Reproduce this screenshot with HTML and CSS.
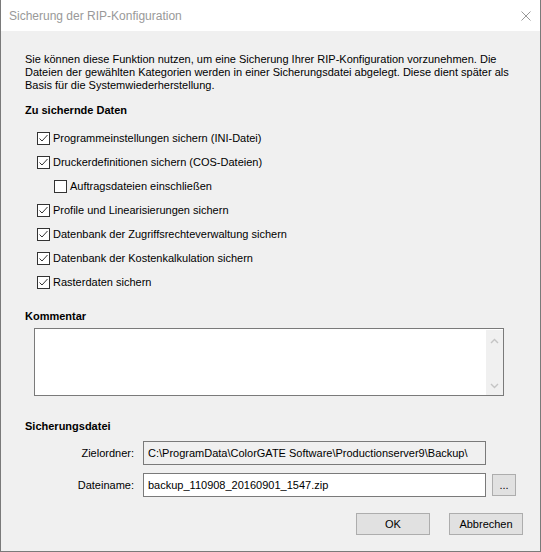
FILE: index.html
```
<html>
<head>
    <title>Sicherung der RIP-Konfiguration</title>
    <link rel="stylesheet" href="styles.css">
</head>
<body>
<div class="window">
    <div class="titlebar">
        <span class="title">Sicherung der RIP-Konfiguration</span>
        <svg class="close" width="10" height="10" viewBox="0 0 10 10">
            <path d="M0.5 0.5 L9.5 9.5 M9.5 0.5 L0.5 9.5" stroke="#999" stroke-width="1" fill="none"/>
        </svg>
    </div>
    <div class="content">
        <p class="intro">Sie können diese Funktion nutzen, um eine Sicherung Ihrer RIP-Konfiguration vorzunehmen. Die Dateien der gewählten Kategorien werden in einer Sicherungsdatei abgelegt. Diese dient später als Basis für die Systemwiederherstellung.</p>

        <h2 class="section">Zu sichernde Daten</h2>
        <div class="checks">
            <label class="check"><span class="box on"><svg width="11" height="11" viewBox="0 0 11 11"><path d="M1.5 5.5 L4 8 L9.5 2" stroke="#333" stroke-width="1" fill="none"/></svg></span>Programmeinstellungen sichern (INI-Datei)</label>
            <label class="check"><span class="box on"><svg width="11" height="11" viewBox="0 0 11 11"><path d="M1.5 5.5 L4 8 L9.5 2" stroke="#333" stroke-width="1" fill="none"/></svg></span>Druckerdefinitionen sichern (COS-Dateien)</label>
            <label class="check sub"><span class="box"></span>Auftragsdateien einschließen</label>
            <label class="check"><span class="box on"><svg width="11" height="11" viewBox="0 0 11 11"><path d="M1.5 5.5 L4 8 L9.5 2" stroke="#333" stroke-width="1" fill="none"/></svg></span>Profile und Linearisierungen sichern</label>
            <label class="check"><span class="box on"><svg width="11" height="11" viewBox="0 0 11 11"><path d="M1.5 5.5 L4 8 L9.5 2" stroke="#333" stroke-width="1" fill="none"/></svg></span>Datenbank der Zugriffsrechteverwaltung sichern</label>
            <label class="check"><span class="box on"><svg width="11" height="11" viewBox="0 0 11 11"><path d="M1.5 5.5 L4 8 L9.5 2" stroke="#333" stroke-width="1" fill="none"/></svg></span>Datenbank der Kostenkalkulation sichern</label>
            <label class="check"><span class="box on"><svg width="11" height="11" viewBox="0 0 11 11"><path d="M1.5 5.5 L4 8 L9.5 2" stroke="#333" stroke-width="1" fill="none"/></svg></span>Rasterdaten sichern</label>
        </div>

        <h2 class="section gap">Kommentar</h2>
        <div class="comment">
            <textarea></textarea>
            <div class="scroll">
                <svg width="9" height="6" viewBox="0 0 9 6"><path d="M1 5 L4.5 1.5 L8 5" stroke="#c4c4c4" stroke-width="1.4" fill="none"/></svg>
                <svg width="9" height="6" viewBox="0 0 9 6"><path d="M1 1 L4.5 4.5 L8 1" stroke="#c4c4c4" stroke-width="1.4" fill="none"/></svg>
            </div>
        </div>

        <h2 class="section file">Sicherungsdatei</h2>
        <div class="row first">
            <span class="label">Zielordner:</span>
            <input type="text" class="field readonly" readonly value="C:\ProgramData\ColorGATE Software\Productionserver9\Backup\">
        </div>
        <div class="row">
            <span class="label">Dateiname:</span>
            <input type="text" class="field" value="backup_110908_20160901_1547.zip">
            <button class="btn browse">...</button>
        </div>

        <div class="buttons">
            <button class="btn action">OK</button>
            <button class="btn action">Abbrechen</button>
        </div>
    </div>
</div>
</body>
</html>
```
FILE: styles.css
```
body {
    margin: 0;
    font-family: "Liberation Sans", Arial, sans-serif;
    font-size: 11px;
    color: #000;
}
.window {
    width: 541px;
    height: 552px;
    box-sizing: border-box;
    border: 1px solid #7a7a7a;
    border-top: none;
    background: #f0f0f0;
}
.titlebar {
    height: 31px;
    background: white;
    display: flex;
    align-items: center;
    justify-content: space-between;
    padding-left: 8px;
}
.title {
    font-size: 12px;
    color: #999;
}
.close {
    margin-right: 9px;
}
.content {
    padding: 22px 17px 0 24px;
}
.intro {
    margin: 0;
    line-height: 13px;
}
h2.section {
    margin: 12px 0 0;
    font-size: 11px;
    font-weight: bold;
    line-height: 13px;
}
h2.gap {
    margin-top: 16px;
}
h2.file {
    margin-top: 24px;
}
.checks {
    margin-top: 9px;
}
.check {
    display: flex;
    align-items: center;
    height: 24px;
    padding-left: 12px;
}
.check.sub {
    padding-left: 29px;
}
.box {
    width: 11px;
    height: 11px;
    border: 1px solid #333;
    background: white;
    margin-right: 3px;
    display: flex;
}
.comment {
    margin: 5px 0 0 9px;
    width: 470px;
    height: 68px;
    box-sizing: border-box;
    border: 1px solid #7a7a7a;
    background: white;
    display: flex;
}
.comment textarea {
    flex: 1;
    border: none;
    resize: none;
    outline: none;
    font-family: inherit;
}
.scroll {
    width: 17px;
    margin: 1px 0 0;
    background: #f0f0f0;
    display: flex;
    flex-direction: column;
    align-items: center;
    justify-content: space-between;
    padding: 8px 0 6px;
    box-sizing: border-box;
}
.row {
    display: flex;
    align-items: center;
    height: 24px;
    margin-top: 8px;
}
.label {
    width: 109px;
    text-align: right;
    margin-right: 9px;
}
.field {
    width: 343px;
    height: 24px;
    box-sizing: border-box;
    border: 1px solid #7a7a7a;
    background: white;
    font-family: inherit;
    font-size: 11px;
    padding: 0 4px;
    outline: none;
}
.field.readonly {
    background: #f0f0f0;
}
.btn {
    background: #e1e1e1;
    border: 1px solid #adadad;
    font-family: inherit;
    font-size: 11px;
    color: #000;
    padding: 0;
    box-sizing: border-box;
}
.browse {
    width: 24px;
    height: 22px;
    margin-left: 6px;
}
.buttons {
    display: flex;
    justify-content: flex-end;
    gap: 19px;
    margin-top: 16px;
}
.action {
    width: 74px;
    height: 22px;
}
```
